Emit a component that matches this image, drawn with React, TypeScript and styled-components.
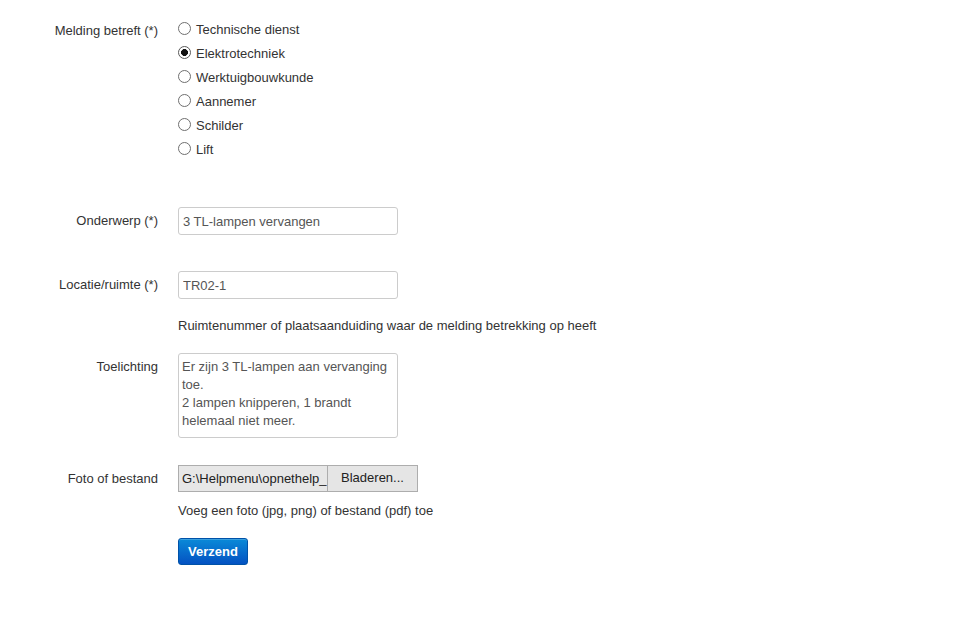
import React from "react";
import styled, { createGlobalStyle } from "styled-components";

const Global = createGlobalStyle`
  html, body { margin: 0; padding: 0; background: #fff; }
  body {
    font-family: "Liberation Sans", Arial, sans-serif;
    font-size: 13px;
    color: #333;
  }
`;

const Form = styled.form`
  display: flex;
  flex-direction: column;
  padding-top: 17px;
`;

const Row = styled.div<{ $mb: number }>`
  display: grid;
  grid-template-columns: 158px 1fr;
  column-gap: 20px;
  margin-bottom: ${(p) => p.$mb}px;
`;

const Label = styled.label<{ $lh: number; $pt?: number }>`
  text-align: right;
  line-height: ${(p) => p.$lh}px;
  padding-top: ${(p) => p.$pt ?? 0}px;
  color: #333;
`;

const Controls = styled.div`
  display: flex;
  flex-direction: column;
  align-items: flex-start;
`;

const RadioRow = styled.label`
  display: flex;
  align-items: center;
  height: 24px;
  gap: 5px;
  cursor: pointer;
`;

const Radio = styled.input.attrs({ type: "radio" })`
  appearance: none;
  margin: 0;
  width: 13px;
  height: 13px;
  border-radius: 50%;
  border: 1px solid #6f6f6f;
  background: #fff;
  position: relative;
  top: -1px;
  &:checked {
    border-color: #5a5a5a;
    background: radial-gradient(circle, #111 0, #111 3.2px, #fff 3.7px);
  }
`;

const TextInput = styled.input`
  box-sizing: border-box;
  width: 220px;
  height: 28px;
  padding: 0 4px;
  border: 1px solid #ccc;
  border-radius: 3px;
  font-family: "Liberation Sans", Arial, sans-serif;
  font-size: 13px;
  color: #555;
  margin: 0;
  outline: none;
`;

const TextArea = styled.textarea`
  box-sizing: border-box;
  width: 220px;
  height: 85px;
  padding: 4px 4px 4px 3px;
  border: 1px solid #ccc;
  border-radius: 3px;
  font-family: "Liberation Sans", Arial, sans-serif;
  font-size: 13px;
  line-height: 18px;
  color: #555;
  resize: none;
  overflow: hidden;
  margin: 0;
  outline: none;
`;

const Help = styled.div<{ $mt: number }>`
  line-height: 18px;
  color: #333;
  margin-top: ${(p) => p.$mt}px;
`;

const FileBox = styled.div`
  display: flex;
  height: 27px;
  box-sizing: border-box;
`;

const FileName = styled.div`
  box-sizing: border-box;
  width: 149px;
  height: 27px;
  padding: 0 3px;
  border: 1px solid #adadad;
  border-right: none;
  background: #e7e7e7;
  color: #222;
  line-height: 25px;
  white-space: nowrap;
  overflow: hidden;
`;

const BrowseButton = styled.button`
  box-sizing: border-box;
  width: 91px;
  height: 27px;
  margin: 0;
  border: 1px solid #adadad;
  background: #e5e5e5;
  font-family: "Liberation Sans", Arial, sans-serif;
  font-size: 13px;
  color: #222;
  padding: 0 0 3px;
`;

const Submit = styled.button`
  box-sizing: border-box;
  width: 70px;
  height: 27px;
  margin: 18px 0 0;
  border: 1px solid #0052a8;
  border-radius: 3px;
  background: linear-gradient(#0a8ad8, #0452c2);
  color: #fff;
  font-family: "Liberation Sans", Arial, sans-serif;
  font-size: 13px;
  font-weight: bold;
  padding: 0 0 1px;
  box-shadow: inset 0 1px 0 rgba(255, 255, 255, 0.2);
`;

const options = [
  "Technische dienst",
  "Elektrotechniek",
  "Werktuigbouwkunde",
  "Aannemer",
  "Schilder",
  "Lift",
];

export default function App() {
  return (
    <>
      <Global />
      <Form onSubmit={(e) => e.preventDefault()}>
        <Row $mb={46}>
          <Label $lh={24} $pt={2}>Melding betreft (*)</Label>
          <Controls>
            {options.map((o) => (
              <RadioRow key={o}>
                <Radio name="betreft" defaultChecked={o === "Elektrotechniek"} />
                {o}
              </RadioRow>
            ))}
          </Controls>
        </Row>
        <Row $mb={36}>
          <Label $lh={28}>Onderwerp (*)</Label>
          <Controls>
            <TextInput defaultValue="3 TL-lampen vervangen" />
          </Controls>
        </Row>
        <Row $mb={18}>
          <Label $lh={28}>Locatie/ruimte (*)</Label>
          <Controls>
            <TextInput defaultValue="TR02-1" />
            <Help $mt={18}>
              Ruimtenummer of plaatsaanduiding waar de melding betrekking op heeft
            </Help>
          </Controls>
        </Row>
        <Row $mb={27}>
          <Label $lh={18} $pt={5}>Toelichting</Label>
          <Controls>
            <TextArea
              defaultValue={
                "Er zijn 3 TL-lampen aan vervanging toe.\n2 lampen knipperen, 1 brandt helemaal niet meer."
              }
            />
          </Controls>
        </Row>
        <Row $mb={0}>
          <Label $lh={27}>Foto of bestand</Label>
          <Controls>
            <FileBox>
              <FileName>G:\Helpmenu\opnethelp_</FileName>
              <BrowseButton type="button">Bladeren...</BrowseButton>
            </FileBox>
            <Help $mt={10}>Voeg een foto (jpg, png) of bestand (pdf) toe</Help>
            <Submit type="submit">Verzend</Submit>
          </Controls>
        </Row>
      </Form>
    </>
  );
}
